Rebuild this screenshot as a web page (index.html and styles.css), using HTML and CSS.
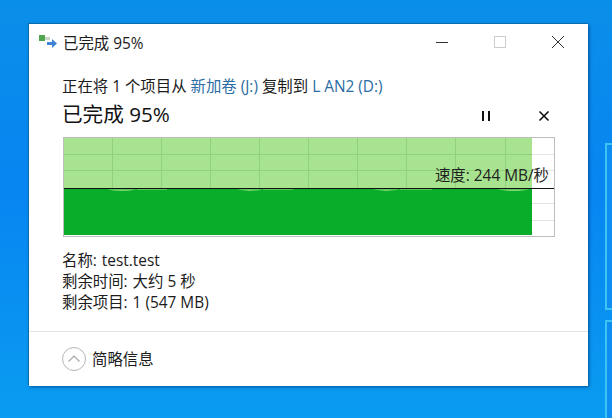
FILE: index.html
```html
<!DOCTYPE html>
<html lang="zh-CN">

<head>
    <meta charset="UTF-8" />
    <title>已完成 95%</title>
    <link rel="stylesheet" href="styles.css">
</head>

<body>
    <div class="tile tile-top"></div>
    <div class="tile tile-bottom"></div>

    <div class="window">
        <div class="title-bar">
            <svg class="app-icon" width="20" height="16" viewBox="0 0 20 16">
                <rect x="0" y="1" width="6" height="6" fill="#4fa64f" />
                <rect x="6" y="3" width="5" height="3" fill="#c9d6c9" />
                <path d="M8 8h5V5l5 4.5-5 4.5v-3H8z" fill="#3f83d6" />
            </svg>
            <span class="title-text">已完成 95%</span>
            <div class="window-buttons">
                <svg width="14" height="14" viewBox="0 0 14 14">
                    <path d="M1 7.5h12" stroke="#333" stroke-width="1" />
                </svg>
                <svg width="14" height="14" viewBox="0 0 14 14">
                    <rect x="1.5" y="1.5" width="11" height="11" fill="none" stroke="#ccc" />
                </svg>
                <svg width="14" height="14" viewBox="0 0 14 14">
                    <path d="M1 1l12 12M13 1L1 13" stroke="#333" stroke-width="1" />
                </svg>
            </div>
        </div>

        <div class="content">
            <p class="copy-line">正在将 1 个项目从 <a href="#">新加卷 (J:)</a> 复制到 <a href="#">L AN2 (D:)</a></p>

            <div class="progress-head">
                <h1>已完成 95%</h1>
                <div class="progress-buttons">
                    <svg width="12" height="12" viewBox="0 0 12 12">
                        <path d="M2 1h2v10H2zM8 1h2v10H8z" fill="#111" />
                    </svg>
                    <svg width="12" height="12" viewBox="0 0 12 12">
                        <path d="M1.5 1.5l9 9M10.5 1.5l-9 9" stroke="#111" stroke-width="1.6" />
                    </svg>
                </div>
            </div>

            <div class="chart">
                <svg width="492" height="100" viewBox="0 0 492 100">
                    <rect width="492" height="100" fill="#fff" />
                    <rect x="1" y="1" width="468" height="51" fill="#a8e48f" />
                    <path d="M49.5 1v50M98.5 1v50M147.5 1v50M196.5 1v50M245.5 1v50M294.5 1v50M343.5 1v50M392.5 1v50M442.5 1v50" stroke="#93cf80" />
                    <path d="M1 17.5h468M1 33.5h468" stroke="#93cf80" />
                    <path d="M469 17.5h22M469 33.5h22M469 66.5h22M469 83.5h22" stroke="#e4e4e4" />
                    <rect x="1" y="52" width="468" height="46" fill="#09ad29" />
                    <path d="M44 52.5c10 1.8 20 1.8 30 0zM74 52.5h30v.5H74zM174 52.5c10 1.5 16 1.5 26 0zM200 52.5h30v.5h-30zM310 52.5c10 1.5 17 1.5 27 0zM337 52.5h32v.5h-32zM434 52.5c10 1.8 22 1.8 33 0z" fill="#a8e48f" />
                    <path d="M1 51.5h490" stroke="#111" stroke-width="1.2" />
                    <rect x=".5" y=".5" width="491" height="99" fill="none" stroke="#bdbdbd" />
                </svg>
                <span class="speed">速度: 244 MB/秒</span>
            </div>

            <ul class="details">
                <li>名称: <span class="value">test.test</span></li>
                <li>剩余时间: <span class="value">大约 5 秒</span></li>
                <li>剩余项目: <span class="value">1 (547 MB)</span></li>
            </ul>
        </div>

        <div class="footer">
            <svg width="24" height="24" viewBox="0 0 24 24">
                <circle cx="12" cy="12" r="11.5" fill="none" stroke="#b5b5b5" />
                <path d="M6.5 14.5L12 9l5.5 5.5" fill="none" stroke="#a8a8a8" stroke-width="1.2" />
            </svg>
            <span>简略信息</span>
        </div>
    </div>
</body>

</html>
```

FILE: styles.css
```css
* {
    margin: 0;
    padding: 0;
    box-sizing: border-box;
}

ul {
    list-style: none;
}

body {
    width: 612px;
    height: 418px;
    overflow: hidden;
    position: relative;
    padding: 24px 0 0 29px;
    background: linear-gradient(180deg, #0a8fe8 0%, #0785f2 45%, #0a9cf0 100%);
    font-family: "Open Sans", "Noto Sans CJK SC", sans-serif;
    font-size: 15.4px;
    color: #1c1c1c;
}

/* 桌面右边的开始菜单磁贴 */
.tile {
    position: absolute;
    left: 605px;
    width: 20px;
    border: 2px solid #3cc4f5;
    background: #0f8cf0;
}

.tile-top {
    top: 143px;
    height: 167px;
}

.tile-bottom {
    top: 320px;
    height: 110px;
}

.window {
    width: 559px;
    height: 362px;
    background: #fff;
    position: relative;
    box-shadow: -1px -1px 0 #0b6aa8, 1px 1px 3px rgba(0, 50, 110, 0.7);
    display: flex;
    flex-direction: column;
}

.title-bar {
    height: 36px;
    padding: 0 23px 0 10px;
    display: flex;
    align-items: center;
}

.app-icon {
    margin-right: 4px;
}

.window-buttons {
    margin-left: auto;
    display: flex;
    gap: 44px;
}

.content {
    padding: 15px 0 0 34px;
    flex: 1;
}

.copy-line {
    line-height: 24px;
    margin-left: -1px;
}

.copy-line a {
    color: #2b6ca3;
    text-decoration: none;
}

.progress-head {
    display: flex;
    align-items: center;
    height: 28px;
    padding-right: 38px;
}

.progress-head h1 {
    font-size: 20.6px;
    font-weight: 400;
    color: #111;
    margin-left: -1px;
}

.progress-buttons {
    margin-left: auto;
    margin-top: 6px;
    display: flex;
    gap: 46px;
}

.chart {
    width: 492px;
    height: 100px;
    margin-top: 10px;
    position: relative;
}

.chart svg {
    display: block;
}

.speed {
    position: absolute;
    right: 6px;
    top: 29px;
    line-height: 20px;
    color: #222;
}

.details {
    margin-top: 13px;
    margin-left: -1px;
    line-height: 21px;
}

.value {
    margin-left: 1px;
}

.footer {
    height: 55px;
    border-top: 1px solid #e3e3e3;
    padding: 0 0 1px 33px;
    display: flex;
    align-items: center;
    gap: 6px;
}
```
